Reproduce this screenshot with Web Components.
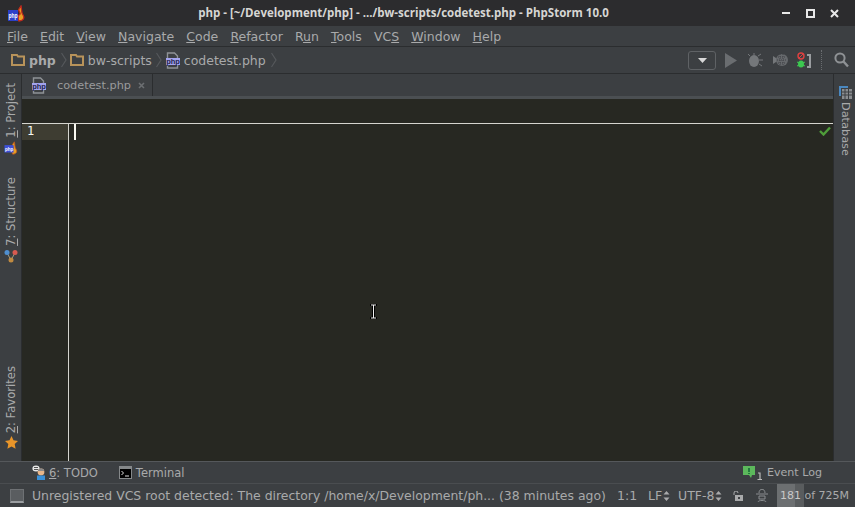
<!doctype html>
<html><head><meta charset="utf-8">
<style>
html,body{margin:0;height:100%;background:#3c3f41}
body{font:12.5px "DejaVu Sans",sans-serif;color:#a9aaab;overflow:hidden}
ide-window{width:855px;height:507px}
</style></head><body>
<ide-window></ide-window>
<script>
const phpIcon=`<svg width="14" height="17" viewBox="0 0 14 17"><path d="M1.500 7V1h7l3 3v3M1.500 13v3h10v-3" fill="none" stroke="#8f9296" stroke-width="1.400"/><rect x="0" y="6" width="14" height="7" fill="#a3a3ee"/><text x="7" y="12" font-family="Liberation Sans" font-size="7.500" font-weight="700" text-anchor="middle" fill="#23234d">php</text></svg>`;
const folder=`<svg width="14" height="12" viewBox="0 0 14 12"><path d="M1 2.500V1h5l1 1.500h6v8.500H1z" fill="none" stroke="#b8935a" stroke-width="2"/></svg>`;
const chevron=`<svg width="6" height="16" viewBox="0 0 6 16"><path d="M.5 1l4.500 7-4.500 7" fill="none" stroke="#55585b" stroke-width="1.200"/></svg>`;
const appIcon=`<svg width="17" height="17" viewBox="0 0 17 17"><path d="M11 16c4 0 6-3 4-6s-1-5-2-9c-1 2-3 3-2 5s2 3 0 4 0 3-1 4z" fill="#e8a023" stroke="#c0281e" stroke-width="1.300"/><rect x="0" y="5" width="10" height="11" fill="#2c3fc8"/><text x="5" y="13" font-family="Liberation Sans" font-size="7.500" font-weight="700" text-anchor="middle" textLength="9" lengthAdjust="spacingAndGlyphs" fill="#fff">php</text></svg>`;
function def(name,css,html){
  customElements.define(name,class extends HTMLElement{
    constructor(){super();const s=this.attachShadow({mode:'open'});s.innerHTML=`<style>${css}</style>${html}`;}
  });
}
def('ide-titlebar',`:host{display:flex;align-items:center;height:26px;background:#2c2c2e;flex:none;padding:0 9px 0 8px;box-sizing:border-box}
 .t{flex:1;text-align:center;font:700 11.500px "Open Sans",sans-serif;color:#d6d6d4;white-space:nowrap;padding-left:8px;margin-top:-1px}
 .ic{display:flex;align-items:center;flex:none}.c{width:24px;height:16px;display:flex;align-items:center;justify-content:center}`,
 `${appIcon}<div class="t">php - [~/Development/php] - .../bw-scripts/codetest.php - PhpStorm 10.0</div>
 <div class="ic"><div class="c"><svg width="9" height="9"><rect y="3" width="8" height="2" fill="#e8e8e8"/></svg></div>
 <div class="c"><svg width="9" height="9"><rect x="1" y="1" width="7" height="7" fill="none" stroke="#e8e8e8" stroke-width="2"/></svg></div>
 <div class="c"><svg width="9" height="9"><path d="M1 1l7 7M8 1l-7 7" stroke="#e8e8e8" stroke-width="2"/></svg></div></div>`);
def('ide-menubar',`:host{display:flex;height:21px;flex:none;box-sizing:border-box;border-bottom:1px solid #2b2d2f;align-items:center;padding:0 0 0 7px;gap:12.100px;background:#3c3f42}
 ::slotted(span){white-space:nowrap}`,`<slot></slot>`);
def('ide-navbar',`:host{display:flex;height:27px;flex:none;box-sizing:border-box;border-bottom:1px solid #2b2d2f;align-items:center;padding:0 6px 0 11px;background:#3c3f42}
 .cr{display:flex;align-items:center;gap:4px}
 b{color:#a9aaab}.ch{margin:0 4px 0 5px;display:flex}.f{display:flex}.sp{flex:1}
 .tb{display:flex;align-items:center}
 .combo{width:28px;height:19px;box-sizing:border-box;border:1px solid #5f6265;border-radius:3px;display:flex;align-items:center;justify-content:center;margin-right:9px}
 .g{display:flex;justify-content:flex-start}
 .sep{width:0;height:20px;border-left:1px dotted #6a6d70;margin:0 12px 0 0}`,
 `<div class="cr"><span class="f">${folder}</span><b>php</b></div><span class="ch" style="margin-right:3px">${chevron}</span>
 <div class="cr"><span class="f">${folder}</span><span>bw-scripts</span></div><span class="ch" style="margin-left:4px;margin-right:4px">${chevron}</span>
 <div class="cr" style="gap:4px"><span class="f">${phpIcon}</span><span>codetest.php</span></div><span class="ch">${chevron}</span>
 <div class="sp"></div>
 <div class="tb"><div class="combo"><svg width="9" height="5"><path d="M0 0h9L4.500 5z" fill="#d8d8d8"/></svg></div>
 <div class="g" style="width:22px"><svg width="12" height="15"><path d="M0 0l12 7.500L0 15z" fill="#6a6d70"/></svg></div>
 <div class="g" style="width:26px"><svg width="16" height="15" viewBox="0 0 16 15"><ellipse cx="7" cy="8" rx="5" ry="6" fill="#74777a"/><path d="M11 3l3-2M12 7h4M12 11l3 2M3 3L1 1M7 0v2" stroke="#74777a"/></svg></div>
 <div class="g" style="width:24px"><svg width="15" height="14" viewBox="0 0 15 14"><path d="M0 3l6 4-6 4z" fill="#74777a"/><circle cx="9" cy="7" r="6" fill="#66696c"/><path d="M5 4h8M4 7h10M5 10h8M7 1v12M10 1v12" stroke="#404346" stroke-dasharray="1 1"/></svg></div>
 <div class="g" style="width:24px"><svg width="16" height="17" viewBox="0 0 16 17"><circle cx="4" cy="4" r="3" fill="none" stroke="#e04040" stroke-width="1.400"/><path d="M2 6l4-4" stroke="#e04040"/><ellipse cx="4" cy="12" rx="3" ry="3.600" fill="#3cc850"/><path d="M0 10l8 4M0 14l8-4" stroke="#3cc850"/><path d="M10 2h4v14h-4v-2h2V4h-2z" fill="#9a9da0"/></svg></div>
 <div class="sep"></div>
 <svg width="15" height="16" viewBox="0 0 15 16"><circle cx="6" cy="6" r="4.600" fill="none" stroke="#8e9194" stroke-width="2"/><path d="M9.500 9.500l4.500 5" stroke="#8e9194" stroke-width="2.400"/></svg></div>`);
def('ide-tabbar',`:host{display:flex;height:25px;flex:none;box-sizing:border-box;background:#3c3f42;border-bottom:3px solid #4b4f52;font-size:11.300px}
 .tab{width:131px;box-sizing:border-box;border-right:1px solid #2b2d2f;background:#3e4144;display:flex;align-items:center;padding:0 0 0 10px;color:#9a9b9c}
 .n{margin-left:11px}.x{margin-left:7px;display:flex}.f{display:flex}`,
 `<div class="tab"><span class="f">${phpIcon}</span><span class="n">codetest.php</span><span class="x"><svg width="7" height="7"><path d="M1 1l5 5M6 1l-5 5" stroke="#6c6f72" stroke-width="1.600"/></svg></span></div>`);
def('ide-stripe',`:host{display:flex;flex-direction:column;width:22px;box-sizing:border-box;flex:none;background:#3c3f42;border-right:1px solid #2b2d2f;padding:9px 0 0 1px;align-items:center}
 :host([side=right]){border-right:0;border-left:1px solid #2b2d2f;padding:12px 0 0 1px}
 .sp{flex:1}`,`<slot></slot><div class="sp"></div><slot name="end"></slot>`);
def('ide-stripe-btn',`:host{display:flex;flex-direction:column-reverse;align-items:center;gap:3px;color:#a9aaab;line-height:15px;font-size:11.600px}
 .l{writing-mode:vertical-rl;transform:rotate(180deg);white-space:nowrap}
 :host([side=right]){flex-direction:column;font-size:11.300px}
 :host([side=right]) .l{transform:none}
 ::slotted(svg){display:block}`,`<slot name="icon"></slot><div class="l"><slot></slot></div>`);
def('ide-editor',`:host{flex:1;display:flex;flex-direction:column;min-width:0;background:#272822;position:relative}
 .head{height:24px;flex:none;border-bottom:1px solid #d5d5cf}
 .body{flex:1;display:flex;min-height:0}
 .gutter{width:46px;flex:none;border-right:1px solid #d5d5cf}
 .row{height:16px;background:#3e3d32;color:#f8f8f2;font:12px/15px "DejaVu Sans Mono",monospace;padding-left:5px;box-sizing:border-box}
 .main{flex:1;display:flex;justify-content:space-between;align-items:flex-start;padding:0 2px 0 5px}
 .caret{width:2px;height:16px;background:#f8f8f0}
 .ok{margin-top:2px}
 .cursor{position:absolute;left:348px;top:205px;display:block}`,
 `<div class="head"></div><div class="body"><div class="gutter"><div class="row">1</div></div><div class="main"><div class="caret"></div>
 <svg class="ok" width="12" height="10" viewBox="0 0 12 10"><path d="M1 5l3.500 3.500L11 1.500" fill="none" stroke="#4f9e3a" stroke-width="2.400"/></svg></div></div>
 <svg class="cursor" width="7" height="15" viewBox="0 0 7 15"><path d="M0 .5h7M0 14.500h7M3.500 0v15" stroke="#000" stroke-width="3"/><path d="M1 1h5M1 14h5M3.500 1v13" stroke="#f0f0f0" stroke-width="1"/></svg>`);
def('ide-toolbar',`:host{display:flex;height:23px;flex:none;box-sizing:border-box;border-top:1px solid #55585b;border-bottom:1px solid #4a4d50;align-items:center;background:#3c3f42;padding:0 33px 0 32px;font-size:11.500px}
 .i{display:flex;align-items:center;gap:4px}.sp{flex:1}`,
 `<div class="i" style="gap:3px"><svg width="14" height="15" viewBox="0 0 14 15"><ellipse cx="4" cy="3.500" rx="3.600" ry="3" fill="#e8e8e8"/><rect x="2" y="2" width="4" height="1" fill="#555"/><rect x="2" y="4" width="4" height="1" fill="#555"/><circle cx="9" cy="7" r="3.400" fill="#e8b68a"/><path d="M6 5c1-2 5-2 6 0v1H6z" fill="#8a8a8a"/><rect x="5" y="10.500" width="8" height="4.500" fill="#3a90d8"/></svg><span><u>6</u>: TODO</span></div>
 <div class="i" style="margin-left:21px"><svg width="13" height="13" viewBox="0 0 13 13"><rect width="13" height="13" fill="#85888a"/><rect x="1" y="3" width="11" height="9" fill="#000"/><path d="M2.500 5l2 2-2 2" fill="none" stroke="#ddd"/><path d="M6 10h4" stroke="#ddd"/></svg><span>Terminal</span></div>
 <div class="sp"></div>
 <div class="i" style="font-size:11.100px"><svg width="20" height="14" viewBox="0 0 20 14"><path d="M0 0h12v9H9l-1 3-2-3H0z" fill="#5cb85c"/><path d="M6 2v4M6 7v1" stroke="#163" stroke-width="1.500"/><path d="M15 7h2v6M14.500 13.500h4.500" stroke="#bbb" stroke-width="1.200" fill="none"/></svg><span>Event Log</span></div>`);
def('ide-statusbar',`:host{display:flex;height:23px;flex:none;box-sizing:border-box;align-items:center;background:#3c3f42;padding:0 7px 0 10px;white-space:nowrap}
 .box{width:14px;height:14px;box-sizing:border-box;background:#5a5d60;border:1px solid #6e7174;border-bottom:2px solid #9a9da0;flex:none}
 .m{margin-left:8px;width:585px;flex:none;font-size:12.440px}
 .p{display:flex;align-items:center;flex:none}
 .mem{display:flex;align-items:center;width:73px;height:23px;background:linear-gradient(90deg,#6c6f71 0,#6c6f71 18px,#595c5e 18px,#595c5e 27px,transparent 27px);padding-left:3px;box-sizing:border-box;margin-left:9px;font-size:11px;flex:none}
 .mem i{font-style:normal;color:#c8c8c8}`,
 `<div class="box"></div><div class="m">Unregistered VCS root detected: The directory /home/x/Development/ph... (38 minutes ago)</div>
 <div class="p"><span style="width:31px">1:1</span><span style="width:30px;display:flex;align-items:center">LF<svg width="7" height="10" style="margin-left:1px"><path d="M3.500 0l3 3.500H.5zM3.500 10l3-3.500H.5z" fill="#a9aaab"/></svg></span>
 <span style="width:55px;display:flex;align-items:center">UTF-8<svg width="7" height="10" style="margin-left:1px"><path d="M3.500 0l3 3.500H.5zM3.500 10l3-3.500H.5z" fill="#a9aaab"/></svg></span>
 <svg width="10" height="10" viewBox="0 0 10 10" style="margin-right:13px"><path d="M1 4V2a2 2 0 0 1 4 0" fill="none" stroke="#a9aaab"/><rect x="2" y="4" width="8" height="6" fill="#a9aaab"/><rect x="5" y="6" width="2" height="2" fill="#3c3f42"/></svg>
 <svg width="12" height="14" viewBox="0 0 12 14"><path d="M3 4c0-5 6-5 6 0M0 5h12M3 7h6v3H3zM2 13c0-2 8-2 8 0" fill="none" stroke="#8a8d90"/></svg></div>
 <div class="mem"><span><i>181</i> of 725M</span></div>`);
def('ide-window',`:host{display:flex;flex-direction:column;overflow:hidden;background:#3c3f42}
 .mid{flex:1;display:flex;min-height:0}.center{flex:1;display:flex;flex-direction:column;min-width:0}`,
 `<ide-titlebar></ide-titlebar>
 <ide-menubar><span><u>F</u>ile</span><span><u>E</u>dit</span><span><u>V</u>iew</span><span><u>N</u>avigate</span><span><u>C</u>ode</span><span><u>R</u>efactor</span><span>R<u>u</u>n</span><span><u>T</u>ools</span><span>VC<u>S</u></span><span><u>W</u>indow</span><span><u>H</u>elp</span></ide-menubar>
 <ide-navbar></ide-navbar>
 <div class="mid">
 <ide-stripe>
  <ide-stripe-btn><svg slot="icon" width="15" height="14" viewBox="0 0 17 17"><path d="M10 16c4 0 6-3 4-6s-1-5-2-9c-1 2-3 3-2 5s2 3 0 4 0 3-1 4z" fill="#e8a023" stroke="#c0581e"/><rect x="0" y="5" width="11" height="9" fill="#3c50d8"/><text x="5.500" y="12" font-family="Liberation Sans" font-size="7.500" font-weight="700" text-anchor="middle" textLength="10" lengthAdjust="spacingAndGlyphs" fill="#fff">php</text></svg><u>1</u>: Project</ide-stripe-btn>
  <ide-stripe-btn style="margin-top:22px"><svg slot="icon" width="14" height="14" viewBox="0 0 14 14"><path d="M3 4l4 7 4-7" stroke="#a09a80" fill="none"/><circle cx="3" cy="3.500" r="2.500" fill="#4f8fd0"/><circle cx="11" cy="3.500" r="2.500" fill="#d85a50"/><circle cx="7" cy="11" r="2.500" fill="#c08a40"/></svg><u>7</u>: Structure</ide-stripe-btn>
  <ide-stripe-btn slot="end" style="margin-bottom:12px"><svg slot="icon" width="13" height="13" viewBox="0 0 13 13"><path d="M6.500 0l2 4.300 4.500.6-3.300 3.100.9 4.700-4.100-2.300-4.100 2.300.9-4.700L0 4.900l4.500-.6z" fill="#e8952a"/></svg><u>2</u>: Favorites</ide-stripe-btn>
 </ide-stripe>
 <div class="center"><ide-tabbar></ide-tabbar><ide-editor></ide-editor></div>
 <ide-stripe side="right"><ide-stripe-btn side="right"><svg slot="icon" width="13" height="13" viewBox="0 0 13 13"><path d="M0 0h9v2H2v8H0z" fill="#4a88c0"/><rect x="3" y="3" width="10" height="10" fill="#8a8d90"/><path d="M3 6h10M3 9h10M6 3v10M9.500 3v10" stroke="#3c3f42"/></svg>Database</ide-stripe-btn></ide-stripe>
 </div>
 <ide-toolbar></ide-toolbar>
 <ide-statusbar></ide-statusbar>`);
</script>
</body></html>
